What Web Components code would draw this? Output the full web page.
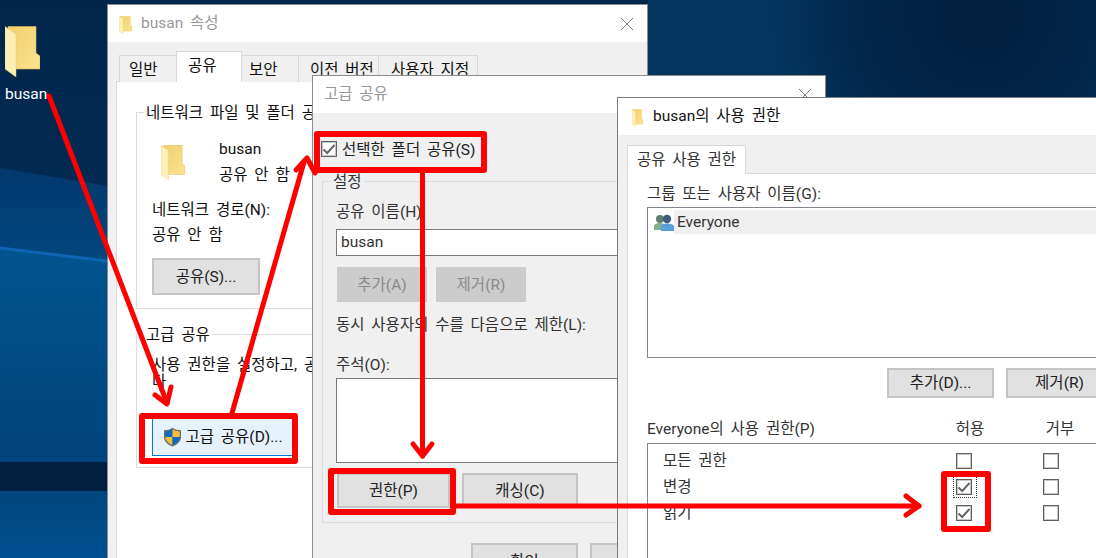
<!DOCTYPE html>
<html lang="ko">
<head>
<meta charset="utf-8">
<title>busan 공유</title>
<style>
    html, body { margin: 0; padding: 0; background: #02264a; }
    body { font: 15.5px/20px Roboto, "Noto Sans CJK KR", sans-serif; word-spacing: 3px; color: #111; overflow: hidden; }
</style>
</head>
<body>
<x-desktop>
    <x-shortcut label="busan"></x-shortcut>

    <x-window title="busan 속성" style="left:107px;top:4px;width:541px;height:570px">
        <x-share-tab></x-share-tab>
    </x-window>

    <x-window title="고급 공유" noicon style="left:312px;top:75px;width:514px;height:500px">
        <x-advanced-share></x-advanced-share>
    </x-window>

    <x-window title="busan의 사용 권한" active noclose style="left:617px;top:97px;width:520px;height:480px;--bar-pad:14px">
        <x-permissions></x-permissions>
    </x-window>

    <x-annotations></x-annotations>
</x-desktop>

<script>
    // Desktop wallpaper, clips everything to the window size
    class XDesktop extends HTMLElement {
        constructor() {
            super();
            this.attachShadow({ mode: 'open' });
        }
        connectedCallback() {
            this.shadowRoot.innerHTML = `
                <style>
                    :host { display: block; position: relative; width: 1096px; height: 558px; overflow: hidden; background: #02264a; }
                    svg { position: absolute; left: 0; top: 0; display: block; }
                </style>
                <svg width="1096" height="558">
                    <defs>
                        <linearGradient id="sky" x1="0" y1="0" x2="0" y2="1"><stop offset="0" stop-color="#02264b"/><stop offset="1" stop-color="#012a52"/></linearGradient>
                        <linearGradient id="mid" x1="0" y1="0" x2="0" y2="1"><stop offset="0" stop-color="#02386c"/><stop offset="1" stop-color="#02477f"/></linearGradient>
                        <linearGradient id="low" x1="0" y1="0" x2="0" y2="1"><stop offset="0" stop-color="#00548f"/><stop offset="1" stop-color="#00437c"/></linearGradient>
                        <linearGradient id="foot" x1="0" y1="0" x2="0" y2="1"><stop offset="0" stop-color="#00477f"/><stop offset="1" stop-color="#004f8f"/></linearGradient>
                        <radialGradient id="glow" gradientUnits="userSpaceOnUse" cx="980" cy="15" r="210">
                            <stop offset="0" stop-color="#021f3e"/><stop offset=".6" stop-color="#02274c"/><stop offset="1" stop-color="#03355f"/>
                        </radialGradient>
                    </defs>
                    <rect width="1096" height="190" fill="url(#sky)"/>
                    <rect x="648" width="448" height="110" fill="url(#glow)"/>
                    <path d="M0 168L107 186V262L0 249Z" fill="url(#mid)"/>
                    <path d="M0 248L107 261V465H0Z" fill="url(#low)"/>
                    <path d="M0 248L107 261" stroke="#0d63b4" stroke-width="3"/>
                    <rect y="462" width="107" height="29" fill="#01203f"/>
                    <rect y="491" width="107" height="67" fill="url(#foot)"/>
                </svg>
                <slot></slot>`;
        }
    }

    // The yellow explorer folder, drawn at any size
    class XFolder extends HTMLElement {
        constructor() {
            super();
            this.attachShadow({ mode: 'open' });
        }
        connectedCallback() {
            const w = this.getAttribute('w') || 35;
            const h = this.getAttribute('h') || 51;
            this.shadowRoot.innerHTML = `
                <style>:host { display: block; width: ${w}px; height: ${h}px; } svg { display: block; }</style>
                <svg width="${w}" height="${h}" viewBox="0 0 35 51" preserveAspectRatio="none">
                    <defs><linearGradient id="g" x1="0" y1="0" x2="1" y2="1">
                        <stop offset="0" stop-color="#f2cf6e"/><stop offset="1" stop-color="#fbe38f"/>
                    </linearGradient></defs>
                    <path d="M3 0.5H31V27L35 30V43H11V40H3Z" fill="url(#g)" stroke="#d9b75c" stroke-width=".6"/>
                    <path d="M0 0.5L11 8V51L0 43Z" fill="#feefb6" stroke="#e3c878" stroke-width=".5"/>
                </svg>`;
        }
    }

    // Folder and its caption on the desktop
    class XShortcut extends HTMLElement {
        constructor() {
            super();
            this.attachShadow({ mode: 'open' });
        }
        connectedCallback() {
            this.shadowRoot.innerHTML = `
                <style>
                    :host { position: absolute; left: 5px; top: 26px; display: block; color: #fff; }
                    .label { margin-top: 7px; line-height: 20px; }
                </style>
                <x-folder></x-folder>
                <div class="label">${this.getAttribute('label')}</div>`;
        }
    }

    // Windows 10 style dialog frame: title bar plus gray body
    class XWindow extends HTMLElement {
        constructor() {
            super();
            this.attachShadow({ mode: 'open' });
        }
        connectedCallback() {
            const active = this.hasAttribute('active');
            const icoW = active ? 11 : 13;
            const icon = this.hasAttribute('noicon') ? '' : `<x-folder class="ico" w="${icoW}" h="18"></x-folder>`;
            const close = this.hasAttribute('noclose') ? '' : `
                <svg class="close" width="14" height="14" viewBox="0 0 14 14"><path d="M1 1L13 13M13 1L1 13" stroke="#777" fill="none"/></svg>`;
            this.shadowRoot.innerHTML = `
                <style>
                    :host {
                        position: absolute; display: flex; flex-direction: column; box-sizing: border-box;
                        background: #f0f0f0; border: 1px solid ${active ? '#7b7b7b' : '#8c8c8c'}; overflow: hidden;
                    }
                    .bar {
                        display: flex; align-items: center; height: 37px; flex: none; background: #fff;
                        padding-left: var(--bar-pad, 11px); color: ${active ? '#111' : '#999'};
                    }
                    .ico { margin: 2px ${active ? 10 : 9}px 0 0; }
                    .bar span { margin-top: -1px; }
                    .close { margin-left: auto; margin-right: 13px; }
                </style>
                <div class="bar">
                    ${icon}<span>${this.getAttribute('title')}</span>${close}
                </div>
                <slot></slot>`;
            // keep the native tooltip away from the host
            this.removeAttribute('title');
        }
    }

    // Gray push button; kind = plain | off | hot
    class XBtn extends HTMLElement {
        constructor() {
            super();
            this.attachShadow({ mode: 'open' });
        }
        connectedCallback() {
            const kind = this.getAttribute('kind') || 'plain';
            const looks = {
                plain: 'background:#e1e1e1;border:2px solid #c4c4c4;color:#222;',
                off: 'background:#cccccc;border:2px solid #cccccc;color:#8a8a8a;',
                hot: 'background:#e5f1fb;border:1px solid #0078d7;color:#111;'
            };
            this.shadowRoot.innerHTML = `
                <style>
                    :host { display: flex; flex: none; box-sizing: border-box; align-items: center; justify-content: center; ${looks[kind]} }
                    ::slotted(x-shield) { margin-right: 3px; }
                </style>
                <slot></slot>`;
        }
    }

    // Checkbox, optionally checked and with the dotted focus frame
    class XCheck extends HTMLElement {
        constructor() {
            super();
            this.attachShadow({ mode: 'open' });
        }
        connectedCallback() {
            const tick = this.hasAttribute('checked')
                ? '<svg width="14" height="14" viewBox="0 0 14 14"><path d="M1.5 7.5L5.2 11L12.5 3" fill="none" stroke="#666" stroke-width="2"/></svg>'
                : '';
            const focus = this.hasAttribute('focused')
                ? '<i></i>' : '';
            this.shadowRoot.innerHTML = `
                <style>
                    :host {
                        display: block; position: relative; width: 16px; height: 16px; box-sizing: border-box;
                        border: 1px solid #5f5f5f; box-shadow: inset 0 0 0 1px rgba(95,95,95,.35); background: #fff; flex: none;
                    }
                    svg { display: block; }
                    i { position: absolute; left: -4px; top: -4px; width: 22px; height: 20px; border: 1px dotted #333; }
                </style>
                ${tick}${focus}`;
        }
    }

    // UAC shield on the advanced sharing button
    class XShield extends HTMLElement {
        constructor() {
            super();
            this.attachShadow({ mode: 'open' });
        }
        connectedCallback() {
            this.shadowRoot.innerHTML = `
                <style>:host { display: block; width: 19px; height: 20px; flex: none; } svg { display: block; }</style>
                <svg width="19" height="20" viewBox="0 0 19 20">
                    <path d="M9.5 .8C7 2.6 4 3.2 1 3.2V10C1 14.5 5 17.8 9.5 19.4C14 17.8 18 14.5 18 10V3.2C15 3.2 12 2.6 9.5 .8Z" fill="#6a6a6a"/>
                    <path d="M9.5 2.2C7.4 3.6 5 4.2 2.2 4.3V10H9.5Z" fill="#0b6cc6"/>
                    <path d="M9.5 2.2C11.6 3.6 14 4.2 16.8 4.3V10H9.5Z" fill="#f6bd36"/>
                    <path d="M2.2 10H9.5V18C6 16.6 2.6 14 2.2 10Z" fill="#f6bd36"/>
                    <path d="M16.8 10H9.5V18C13 16.6 16.4 14 16.8 10Z" fill="#0b6cc6"/>
                </svg>`;
        }
    }

    // Two people icon for the Everyone entry
    class XUsers extends HTMLElement {
        constructor() {
            super();
            this.attachShadow({ mode: 'open' });
        }
        connectedCallback() {
            this.shadowRoot.innerHTML = `
                <style>:host { display: block; width: 20px; height: 19px; flex: none; } svg { display: block; }</style>
                <svg width="20" height="19" viewBox="0 0 20 19">
                    <circle cx="6" cy="6" r="4" fill="#5d7f6a"/>
                    <path d="M0 17V13C0 11 3 10 6 10C9 10 11 11 11 13V17Z" fill="#7fb08a"/>
                    <circle cx="13" cy="6" r="4.2" fill="#3c5f80"/>
                    <path d="M7 18V13.5C7 11.5 10 10.5 13 10.5C16 10.5 20 11.5 20 13.5V18Z" fill="#5b9fd8"/>
                </svg>`;
        }
    }

    // Group box with its caption sitting on the top border
    class XGroup extends HTMLElement {
        constructor() {
            super();
            this.attachShadow({ mode: 'open' });
        }
        connectedCallback() {
            this.shadowRoot.innerHTML = `
                <style>
                    :host { display: block; box-sizing: border-box; border: 1px solid #dcdcdc; position: relative; }
                    .cap {
                        position: absolute; left: var(--cap-left, 7px); top: -10px; padding: 0 2px;
                        background: var(--cap-bg, #fff); line-height: 20px; white-space: nowrap;
                    }
                </style>
                <div class="cap">${this.getAttribute('caption')}</div>
                <slot></slot>`;
        }
    }

    // First dialog: the Sharing tab of the folder properties
    class XShareTab extends HTMLElement {
        constructor() {
            super();
            this.attachShadow({ mode: 'open' });
        }
        connectedCallback() {
            this.shadowRoot.innerHTML = `
                <style>
                    :host { display: block; padding: 10px 0 0 8px; }
                    .tabs { display: flex; align-items: flex-end; height: 30px; padding-left: 3px; margin-bottom: -1px; position: relative; }
                    .tab {
                        box-sizing: border-box; height: 27px; border: 1px solid #d9d9d9; border-bottom: 0; margin-right: -1px;
                        line-height: 28px; background: #f0f0f0; flex: none; white-space: nowrap; overflow: hidden;
                    }
                    .tab.on { background: #fff; position: relative; z-index: 1; height: 31px; }
                    .panel { box-sizing: border-box; width: 520px; height: 520px; background: #fff; border: 1px solid #d9d9d9; padding: 30px 0 0 19px; }
                    .top { height: 197px; }
                    .bottom { height: 134px; margin-top: 25px; }
                    x-group { width: 480px; padding-left: 15px; }
                    .row { display: flex; margin-top: 25px; }
                    .row x-folder { margin: 7px 34px 0 9px; }
                    .line { white-space: nowrap; padding-top: 1px; margin-bottom: -1px; }
                    .gap { margin-top: 6px; }
                    .multi { white-space: pre; line-height: 17px; margin-top: 22px; }
                </style>
                <div class="tabs">
                    <div class="tab" style="width:58px;padding-left:9px">일반</div>
                    <div class="tab on" style="width:66px;padding-left:11px">공유</div>
                    <div class="tab" style="width:58px;padding-left:7px">보안</div>
                    <div class="tab" style="width:81px;padding-left:11px">이전 버전</div>
                    <div class="tab" style="width:100px;padding-left:12px">사용자 지정</div>
                </div>
                <div class="panel">
                    <x-group class="top" caption="네트워크 파일 및 폴더 공유">
                        <div class="row">
                            <x-folder w="24" h="35"></x-folder>
                            <div>
                                <div class="line">busan</div>
                                <div class="line gap">공유 안 함</div>
                            </div>
                        </div>
                        <div class="line" style="margin-top:15px">네트워크 경로(N):</div>
                        <div class="line" style="margin-top:5px">공유 안 함</div>
                        <x-btn style="width:108px;height:37px;margin-top:14px">공유(S)...</x-btn>
                    </x-group>
                    <x-group class="bottom" caption="고급 공유">
                        <div class="multi">사용 권한을 설정하고, 공유
다</div>
                        <x-btn kind="hot" style="width:142px;height:38px;margin-top:27px"><x-shield></x-shield>고급 공유(D)...</x-btn>
                    </x-group>
                </div>`;
        }
    }

    // Second dialog: advanced sharing
    class XAdvancedShare extends HTMLElement {
        constructor() {
            super();
            this.attachShadow({ mode: 'open' });
        }
        connectedCallback() {
            this.shadowRoot.innerHTML = `
                <style>
                    :host { display: block; padding: 28px 0 0 8px; color: #333; --cap-bg: #f0f0f0; --cap-left: 8px; }
                    .share { display: flex; align-items: center; gap: 5px; height: 16px; color: #222; }
                    .share span { padding-top: 2px; }
                    x-group { width: 495px; height: 342px; margin: 24px 0 0 1px; padding-left: 13px; }
                    .line { white-space: nowrap; padding-top: 1px; margin-bottom: -1px; }
                    .field { box-sizing: border-box; width: 470px; background: #fff; border: 1px solid #7a7a7a; }
                    .name { height: 27px; margin-top: 8px; padding-left: 4px; line-height: 25px; }
                    .note { height: 85px; margin-top: 4px; }
                    .btns { display: flex; margin-left: 1px; }
                    .foot { display: flex; gap: 12px; margin: 20px 0 0 150px; }
                </style>
                <div class="share"><x-check checked></x-check><span>선택한 폴더 공유(S)</span></div>
                <x-group caption="설정">
                    <div class="line" style="margin-top:19px">공유 이름(H):</div>
                    <div class="field name">busan</div>
                    <div class="btns" style="margin-top:11px;gap:9px">
                        <x-btn kind="off" style="width:90px;height:35px">추가(A)</x-btn>
                        <x-btn kind="off" style="width:90px;height:35px">제거(R)</x-btn>
                    </div>
                    <div class="line" style="margin-top:12px">동시 사용자의 수를 다음으로 제한(L):</div>
                    <div class="line" style="margin-top:20px">주석(O):</div>
                    <div class="field note"></div>
                    <div class="btns" style="margin-top:10px;gap:12px">
                        <x-btn style="width:113px;height:35px">권한(P)</x-btn>
                        <x-btn style="width:116px;height:35px">캐싱(C)</x-btn>
                    </div>
                </x-group>
                <div class="foot">
                    <x-btn style="width:107px;height:37px">확인</x-btn>
                    <x-btn style="width:107px;height:37px">취소</x-btn>
                </div>`;
        }
    }

    // Third dialog: share permissions of the folder
    class XPermissions extends HTMLElement {
        constructor() {
            super();
            this.attachShadow({ mode: 'open' });
        }
        connectedCallback() {
            this.shadowRoot.innerHTML = `
                <style>
                    :host { display: block; padding: 10px 0 0 9px; color: #333; }
                    .tab {
                        box-sizing: border-box; width: 119px; height: 29px; background: #fff; border: 1px solid #d9d9d9; border-bottom: 0;
                        text-align: center; line-height: 28px; margin-bottom: -1px; position: relative; z-index: 1;
                    }
                    .panel { box-sizing: border-box; width: 500px; height: 420px; background: #fff; border: 1px solid #d9d9d9; padding: 9px 0 0 19px; }
                    .line { padding-top: 1px; margin-bottom: -1px; }
                    .box { box-sizing: border-box; width: 480px; background: #fff; border: 1px solid #828790; }
                    .list { height: 151px; margin-top: 4px; padding-top: 2px; }
                    .entry { display: flex; align-items: center; height: 24px; padding-left: 6px; }
                    .who { flex: 1; background: #f0f0f0; height: 24px; line-height: 25px; padding-left: 3px; }
                    .btns { display: flex; gap: 12px; margin: 10px 0 0 240px; }
                    .head { display: flex; margin-top: 21px; margin-bottom: -1px; height: 20px; white-space: nowrap; }
                    .head b { font-weight: 400; width: 40px; text-align: center; }
                    .grants { height: 130px; margin-top: 5px; padding-top: 4px; }
                    .grant { display: flex; align-items: center; height: 26px; padding-left: 15px; }
                    .grant span { width: 293px; }
                    .grant span + x-check { margin-right: 71px; }
                </style>
                <div class="tab">공유 사용 권한</div>
                <div class="panel">
                    <div class="line">그룹 또는 사용자 이름(G):</div>
                    <div class="box list">
                        <div class="entry"><x-users></x-users><div class="who">Everyone</div></div>
                    </div>
                    <div class="btns">
                        <x-btn style="width:107px;height:30px">추가(D)...</x-btn>
                        <x-btn style="width:107px;height:30px">제거(R)</x-btn>
                    </div>
                    <div class="head">
                        <span style="width:303px">Everyone의 사용 권한(P)</span>
                        <b>허용</b><b style="margin-left:50px">거부</b>
                    </div>
                    <div class="box grants">
                        <div class="grant"><span>모든 권한</span><x-check></x-check><x-check></x-check></div>
                        <div class="grant"><span>변경</span><x-check checked focused></x-check><x-check></x-check></div>
                        <div class="grant"><span>읽기</span><x-check checked></x-check><x-check></x-check></div>
                    </div>
                </div>`;
        }
    }

    // Red boxes and arrows painted over the screenshot
    class XAnnotations extends HTMLElement {
        constructor() {
            super();
            this.attachShadow({ mode: 'open' });
        }
        connectedCallback() {
            const boxes = [[142, 416, 153, 45], [317, 134, 167, 36], [331, 471, 122, 41], [944, 474, 44, 55]];
            const lines = [
                'M49 96L167 403', 'M155 395L167 404L171 387',
                'M232 413L304 162', 'M296 170L307 158L315 173',
                'M422.5 172V456', 'M413 444L422.5 456L432 444',
                'M455 506H919', 'M906 496L919 506L906 515'
            ];
            this.shadowRoot.innerHTML = `
                <style>:host { position: absolute; left: 0; top: 0; display: block; } svg { display: block; }</style>
                <svg width="1096" height="558" fill="none" stroke="#ff0000" stroke-width="5" stroke-linejoin="round">
                    ${lines.map((d) => `<path d="${d}" stroke-linecap="round"/>`).join('')}
                    ${boxes.map((b) => `<rect x="${b[0]}" y="${b[1]}" width="${b[2]}" height="${b[3]}" stroke-width="6"/>`).join('')}
                </svg>`;
        }
    }

    customElements.define('x-desktop', XDesktop);
    customElements.define('x-folder', XFolder);
    customElements.define('x-shortcut', XShortcut);
    customElements.define('x-window', XWindow);
    customElements.define('x-btn', XBtn);
    customElements.define('x-check', XCheck);
    customElements.define('x-shield', XShield);
    customElements.define('x-users', XUsers);
    customElements.define('x-group', XGroup);
    customElements.define('x-share-tab', XShareTab);
    customElements.define('x-advanced-share', XAdvancedShare);
    customElements.define('x-permissions', XPermissions);
    customElements.define('x-annotations', XAnnotations);
</script>
</body>
</html>
